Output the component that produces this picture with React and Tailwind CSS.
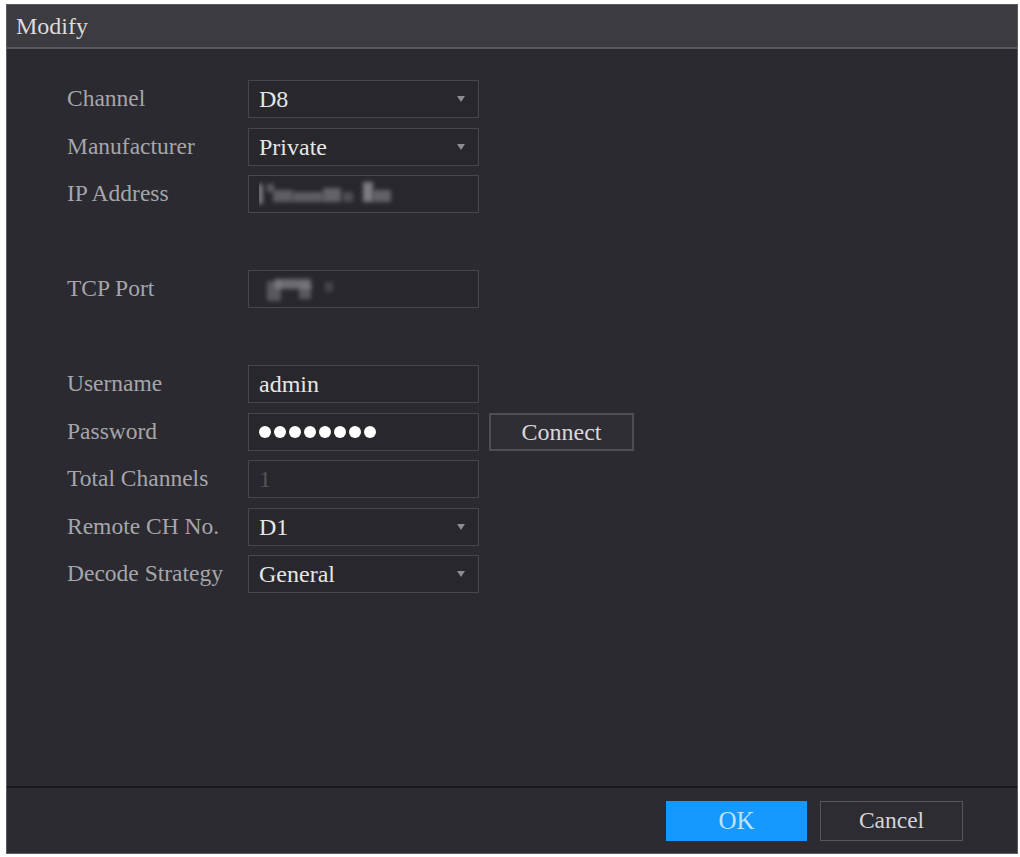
import React from "react";

const font = { fontFamily: '"Liberation Serif", "DejaVu Serif", serif' };

function Arrow() {
  return (
    <svg width="10" height="8" viewBox="0 0 10 8" className="shrink-0">
      <path d="M1 1 L9 1 L5 7 Z" fill="#8c8c92" />
    </svg>
  );
}

function Field({ children, select, dim }) {
  return (
    <div
      className={`w-[231px] h-[38px] border border-[#46464c] bg-[#27272c] flex items-center pl-[10px] pr-[12px] ${
        dim ? "text-[#55555a]" : "text-[#e6e6e6]"
      } text-[24px] leading-none`}
    >
      <div className="flex-1 flex items-center overflow-hidden">{children}</div>
      {select && <Arrow />}
    </div>
  );
}

function Row({ label, children, extra }) {
  return (
    <div className="h-[47.5px] flex items-start">
      <div className="w-[181px] h-[38px] flex items-center text-[23.5px] leading-none text-[#a6a6aa] whitespace-nowrap">
        {label}
      </div>
      {children}
      {extra}
    </div>
  );
}

function Blur({ blocks }) {
  return (
    <div className="relative w-full h-[36px]">
      {blocks.map((b, i) => (
        <div
          key={i}
          className="absolute bg-[#8a8a90] blur-[2px]"
          style={{ left: b[0], top: b[1], width: b[2], height: b[3], opacity: b[4] ?? 0.9 }}
        />
      ))}
    </div>
  );
}

export default function App() {
  return (
    <div className="w-full h-[857px] bg-white pt-[4px] pl-[6px] pr-[2px] pb-[3px]" style={font}>
      <div className="w-full h-full flex flex-col border border-[#5c5c60] bg-[#2a2a30]">
        <div className="h-[44px] shrink-0 bg-[#3b3b40] border-b-2 border-[#57575c] flex items-center px-[9px] text-[24px] leading-none text-[#dcdcdc]">
          Modify
        </div>
        <div className="flex-1 pt-[31px] pl-[60px] flex flex-col">
          <Row label="Channel">
            <Field select>D8</Field>
          </Row>
          <Row label="Manufacturer">
            <Field select>Private</Field>
          </Row>
          <Row label="IP Address">
            <Field>
              <Blur
                blocks={[
                  [-2, 8, 6, 20, 0.8],
                  [8, 8, 7, 8, 0.55],
                  [14, 14, 20, 12, 0.55],
                  [34, 16, 30, 10, 0.55],
                  [64, 12, 18, 14, 0.6],
                  [84, 16, 10, 10, 0.4],
                  [104, 6, 10, 20, 0.85],
                  [114, 14, 18, 12, 0.6],
                ]}
              />
            </Field>
          </Row>
          <div className="h-[47.5px]" />
          <Row label="TCP Port">
            <Field>
              <Blur
                blocks={[
                  [8, 10, 14, 20, 0.5],
                  [16, 8, 36, 10, 0.7],
                  [40, 14, 12, 14, 0.5],
                  [66, 11, 8, 10, 0.3],
                ]}
              />
            </Field>
          </Row>
          <div className="h-[47.5px]" />
          <Row label="Username">
            <Field>admin</Field>
          </Row>
          <Row
            label="Password"
            extra={
              <div className="ml-[10px] w-[145px] h-[38px] border-2 border-[#4e4e54] bg-[#2e2e34] flex items-center justify-center text-[24px] leading-none text-[#d8d8dc]">
                Connect
              </div>
            }
          >
            <Field>
              <div className="flex gap-[3px] items-center">
                {Array.from({ length: 8 }).map((_, i) => (
                  <span key={i} className="w-[12px] h-[12px] rounded-full bg-white" />
                ))}
              </div>
            </Field>
          </Row>
          <Row label="Total Channels">
            <Field dim>1</Field>
          </Row>
          <Row label="Remote CH No.">
            <Field select>D1</Field>
          </Row>
          <Row label="Decode Strategy">
            <Field select>General</Field>
          </Row>
        </div>
        <div className="h-[67px] shrink-0 border-t-2 border-[#18181c] bg-[#2b2b31] flex items-center justify-end pr-[54px] gap-[13px]">
          <div className="w-[141px] h-[40px] bg-[#1598ff] flex items-center justify-center text-[25px] leading-none text-[#bfe3ff]">
            OK
          </div>
          <div className="w-[143px] h-[40px] border border-[#56565c] bg-[#2c2c32] flex items-center justify-center text-[23.5px] leading-none text-[#d4d4d8]">
            Cancel
          </div>
        </div>
      </div>
    </div>
  );
}
